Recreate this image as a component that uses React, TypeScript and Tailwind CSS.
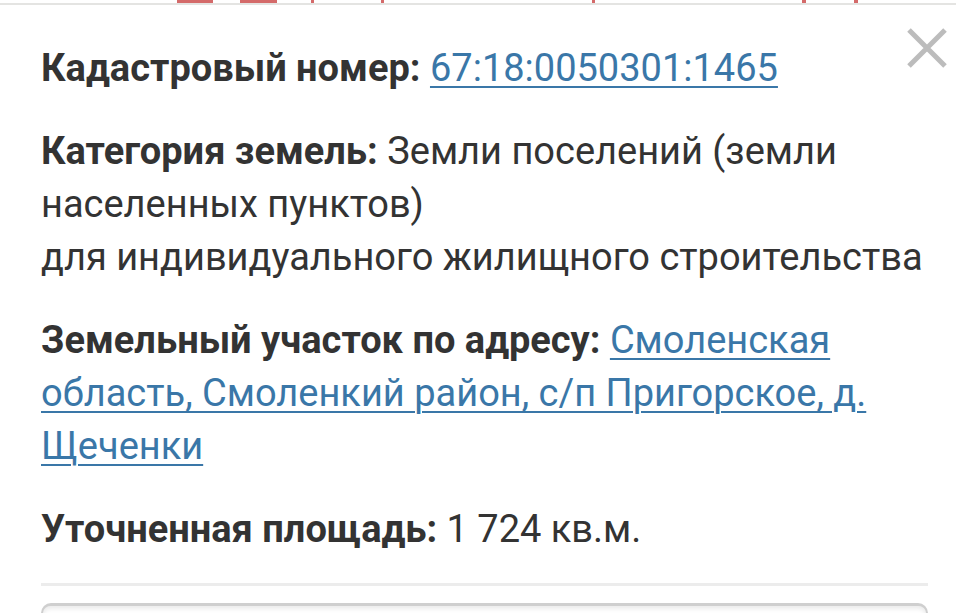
const ticks = [
  { left: 177, w: 36 },
  { left: 240, w: 37 },
  { left: 311, w: 3 },
  { left: 381, w: 3 },
  { left: 592, w: 3 },
  { left: 802, w: 4 },
  { left: 854, w: 4 },
];

function TopStrip() {
  return (
    <div className="relative h-[5px] w-full bg-[#e4e4e2]">
      <div className="h-[3px] w-full bg-white">
        {ticks.map((t, i) => (
          <span
            key={i}
            className="absolute top-0 h-[3px] bg-[#d46a6a]"
            style={{ left: t.left, width: t.w }}
          />
        ))}
      </div>
    </div>
  );
}

function Label({ children }: { children: React.ReactNode }) {
  return <span className="font-bold">{children}</span>;
}

function Link({ children }: { children: React.ReactNode }) {
  return (
    <a href="#" className="text-[#3a77a8] underline decoration-2 underline-offset-[5px]">
      {children}
    </a>
  );
}

function CloseIcon() {
  return (
    <svg width="44" height="44" viewBox="0 0 44 44" fill="none">
      <path d="M4 4 L40 40 M40 4 L4 40" stroke="#bcbcbc" strokeWidth="5" />
    </svg>
  );
}

export default function App() {
  return (
    <div className="h-[613px] w-[956px] overflow-hidden bg-white font-['Roboto',sans-serif] text-[#333]">
      <TopStrip />

      <div className="relative pl-[41px] pr-[20px] pt-[37px]">
        {/* close */}
        <button className="absolute right-[7px] top-[21px]">
          <CloseIcon />
        </button>

        <div className="flex flex-col gap-[30px] text-[38px] leading-[53px]">
          <p>
            <Label>Кадастровый номер:</Label> <Link>67:18:0050301:1465</Link>
          </p>
          <p>
            <Label>Категория земель:</Label> Земли поселений (земли населенных пунктов)
            <br />
            для индивидуального жилищного строительства
          </p>
          <p>
            <Label>Земельный участок по адресу:</Label>{" "}
            <Link>Смоленская область, Смоленкий район, с/п Пригорское, д. Щеченки</Link>
          </p>
          <p>
            <Label>Уточненная площадь:</Label> 1 724 кв.м.
          </p>
        </div>

        <div className="mt-[27px] h-[3px] w-[887px] bg-[#ececec]" />

        <div className="mt-[17px] h-[40px] w-[887px] rounded-t-[10px] border-x-2 border-t-[3px] border-[#cfcfcf] shadow-[inset_0_3px_4px_rgba(0,0,0,0.08)]" />
      </div>
    </div>
  );
}
